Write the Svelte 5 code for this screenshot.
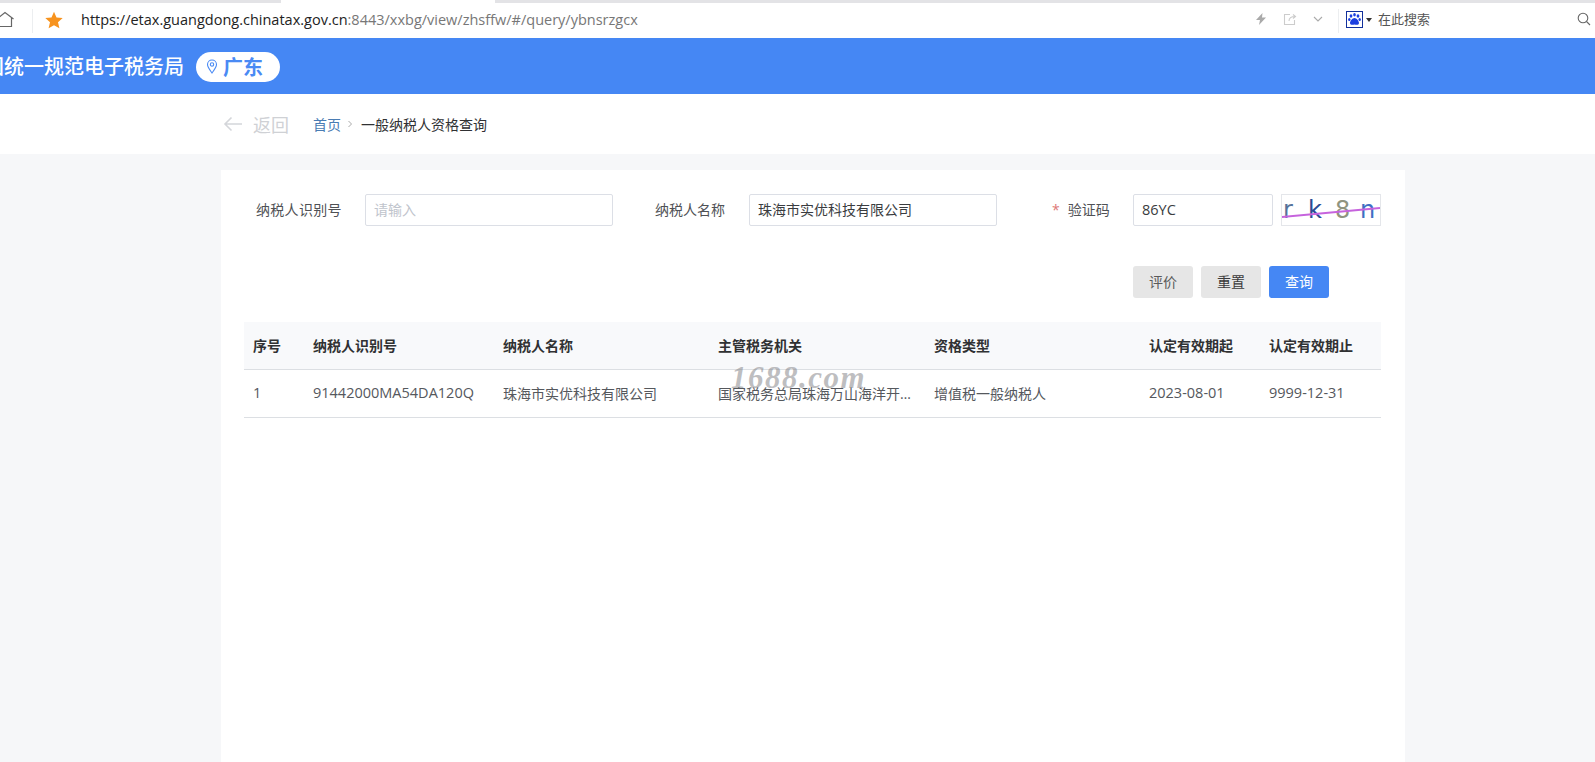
<script>
  const cols = [
    { h: '序号', v: '1', w: 60, latin: true },
    { h: '纳税人识别号', v: '91442000MA54DA120Q', w: 190, latin: true },
    { h: '纳税人名称', v: '珠海市实优科技有限公司', w: 215 },
    { h: '主管税务机关', v: '国家税务总局珠海万山海洋开发试验区税务局', w: 216 },
    { h: '资格类型', v: '增值税一般纳税人', w: 215 },
    { h: '认定有效期起', v: '2023-08-01', w: 120, latin: true },
    { h: '认定有效期止', v: '9999-12-31', w: 121, latin: true }
  ];
  const grid = cols.map((c) => c.w + 'px').join(' ');
</script>

<div class="page">
  <div class="browser">
    <div class="tabstrip"><i class="t1"></i><i class="t2"></i><i class="t3"></i></div>
    <div class="addr">
      <svg class="home" width="16" height="18" viewBox="0 0 16 18" fill="none" stroke="#666" stroke-width="1.2"><path d="M-3 8 L5 1.5 L13.5 8 M11.5 7 V15.5 H-2"/></svg>
      <span class="sep s1"></span>
      <svg class="star" width="18" height="18" viewBox="0 0 18 18"><path fill="#f7931e" d="M9 .8l2.5 5.7 6.2.6-4.7 4.1 1.4 6.1L9 14.2l-5.4 3.1L5 11.2.3 7.1l6.2-.6z"/></svg>
      <span class="url"><b>https://etax.guangdong.chinatax.gov.cn</b>:8443/xxbg/view/zhsffw/#/query/ybnsrzgcx</span>
      <div class="tools">
        <svg width="14" height="14" viewBox="0 0 14 14"><path fill="#aaa" d="M8.5 1 2 8h4l-1 5 7-7.5H8z"/></svg>
        <svg width="14" height="14" viewBox="0 0 14 14" fill="none" stroke="#ccc" stroke-width="1.1"><path d="M7 2.5H1.5v10h10V8M6 9c0-3 2-4.500 6-4.500M10 2.500l2.500 2-2.500 2"/></svg>
        <svg width="12" height="12" viewBox="0 0 12 12" fill="none" stroke="#aaa" stroke-width="1.1"><path d="M2 4l4 4 4-4"/></svg>
      </div>
      <span class="sep s2"></span>
      <svg class="paw" width="17" height="17" viewBox="0 0 17 17">
        <rect x=".5" y=".5" width="16" height="16" fill="#fff" stroke="#12309c"/>
        <g fill="#1c3fe0"><ellipse cx="5" cy="5" rx="1.400" ry="1.800"/><ellipse cx="8.500" cy="3.800" rx="1.300" ry="1.700"/><ellipse cx="12" cy="5" rx="1.400" ry="1.800"/><ellipse cx="3.300" cy="8.500" rx="1.200" ry="1.500"/><ellipse cx="13.700" cy="8.500" rx="1.200" ry="1.500"/><path d="M8.500 7c-2 0-4.500 3-4.500 5 0 2 2.500 2 4.500 1.500 2 .5 4.500.5 4.500-1.500 0-2-2.500-5-4.500-5z"/></g>
      </svg>
      <span class="caret"></span>
      <span class="search">在此搜索</span>
      <svg class="mag" width="14" height="14" viewBox="0 0 14 14" fill="none" stroke="#666" stroke-width="1.100"><circle cx="6" cy="6" r="4.800"/><path d="M9.500 9.500 13 13"/></svg>
    </div>
  </div>

  <header class="banner">
    <h1>全国统一规范电子税务局</h1>
    <div class="pill">
      <svg width="12" height="15" viewBox="0 0 12 15" fill="none" stroke="#4a8af4" stroke-width="1.100"><path d="M6 14C3.500 10.500 1.500 8 1.500 5.500a4.500 4.500 0 0 1 9 0C10.500 8 8.500 10.500 6 14z"/><circle cx="6" cy="5.500" r="1.700"/></svg>
      <span>广东</span>
    </div>
  </header>

  <nav class="crumbs">
    <div class="back">
      <svg width="20" height="16" viewBox="0 0 20 16" fill="none" stroke="#d4d6da" stroke-width="1.600"><path d="M19 8H2M8.500 1.500 2 8l6.500 6.500"/></svg>
      <span>返回</span>
    </div>
    <a class="home-link" href="#top">首页</a>
    <svg class="chev" width="6" height="8" viewBox="0 0 6 8" fill="none" stroke="#aaa"><path d="M1.500 1 4.500 4 1.500 7"/></svg>
    <span class="current">一般纳税人资格查询</span>
  </nav>

  <main class="card">
    <form class="filters">
      <label class="l1" for="nsrsbh">纳税人识别号</label>
      <input class="i1" id="nsrsbh" placeholder="请输入" />
      <label class="l2" for="nsrmc">纳税人名称</label>
      <input class="i2" id="nsrmc" value="珠海市实优科技有限公司" />
      <label class="l3" for="yzm"><em>*</em>验证码</label>
      <input class="i3" id="yzm" value="86YC" />
      <div class="captcha">
        <svg width="100" height="32" viewBox="0 0 100 32">
          <text x="2" y="24" fill="#56739a">r</text>
          <text x="27" y="24" fill="#2b4a94">k</text>
          <text x="54" y="24" fill="#8f9480">8</text>
          <text x="79" y="24" fill="#3f6fc4">n</text>
          <path d="M1 23 99 14" stroke="#c663dd" stroke-width="2"/>
        </svg>
      </div>
    </form>

    <div class="actions">
      <button type="button" class="grey soft">评价</button>
      <button type="button" class="grey">重置</button>
      <button type="button" class="primary">查询</button>
    </div>

    <div class="table">
      <div class="row head" style="grid-template-columns:{grid}">
        {#each cols as c}<div class="cell">{c.h}</div>{/each}
      </div>
      <div class="row body" style="grid-template-columns:{grid}">
        {#each cols as c}<div class="cell" class:latin={c.latin}>{c.v}</div>{/each}
      </div>
      <span class="mark">1688.com</span>
    </div>
  </main>
</div>

<style>
  :global(body) {
    margin: 0;
    overflow: hidden;
    background: #f6f7f9;
  }
  .page {
    width: 1595px;
    height: 762px;
    overflow: hidden;
    display: flex;
    flex-direction: column;
    font-family: "Open Sans", "Noto Sans CJK SC", sans-serif;
    background: #f6f7f9;
  }
  .browser {
    height: 38px;
    flex: none;
    background: #fff;
    display: flex;
    flex-direction: column;
  }
  .tabstrip {
    height: 3px;
    display: flex;
    flex: none;
  }
  .tabstrip i { display: block; height: 3px; background: #e3e3e6; }
  .t1 { width: 281px; }
  .t2 { width: 214px; background: #fff !important; }
  .t3 { flex: 1; }
  .addr {
    flex: 1;
    display: flex;
    align-items: center;
  }
  .home { margin-top: -1px; flex: none; width: 16px; }
  .sep { width: 1px; height: 24px; background: #eceef0; flex: none; }
  .s1 { margin-left: 16px; }
  .star { margin-left: 12px; margin-top: -1px; flex: none; }
  .url {
    margin-left: 18px;
    font-size: 14.500px;
    color: #777;
    white-space: nowrap;
    width: 1126px;
    margin-top: -3px;
  }
  .url b { font-weight: 400; color: #222; }
  .tools {
    display: flex;
    align-items: center;
    gap: 15px;
    width: 84px;
    margin-left: 47px;
    margin-top: -3px;
  }
  .paw { margin-left: 7px; flex: none; margin-top: -2px; }
  .caret {
    margin-left: 3px;
    border: 3px solid transparent;
    border-top: 4px solid #333;
    border-bottom: 0;
    flex: none;
    margin-top: -2px;
  }
  .search {
    margin-left: 6px;
    font-size: 13px;
    color: #555;
    width: 199px;
    margin-top: -4px;
  }
  .mag { flex: none; margin-top: -3px; }

  .banner {
    height: 56px;
    flex: none;
    background: #4587f4;
    display: flex;
    align-items: center;
  }
  h1 {
    margin: 2px 0 0 -36px;
    font-size: 20px;
    font-weight: 500;
    color: #fff;
    line-height: 30px;
    white-space: nowrap;
  }
  .pill {
    margin-left: 12px;
    width: 84px;
    height: 30px;
    border-radius: 15px;
    background: #fff;
    display: flex;
    align-items: center;
    box-sizing: border-box;
    padding-left: 10px;
    gap: 5px;
    color: #4a8af4;
    font-size: 20px;
    font-weight: 700;
    margin-top: 1px;
  }
  .crumbs {
    height: 60px;
    flex: none;
    background: #fff;
    display: flex;
    align-items: center;
    padding-left: 223px;
    font-size: 14px;
  }
  .back {
    display: flex;
    align-items: center;
    gap: 10px;
    color: #cfd1d5;
    font-size: 18px;
    width: 90px;
  }
  .home-link { color: #4a7cb3; text-decoration: none; }
  .chev { margin: 0 8px 0 6px; }
  .current { color: #303133; }

  .card {
    margin: 16px 0 0 221px;
    width: 1184px;
    flex: 1;
    background: #fff;
    box-sizing: border-box;
    padding: 24px 24px 0 23px;
  }
  .filters {
    display: flex;
    align-items: center;
    height: 32px;
    font-size: 14px;
    color: #606266;
  }
  label { white-space: nowrap; color: #4f5155; padding-bottom: 3px; }
  input {
    box-sizing: border-box;
    height: 32px;
    border: 1px solid #dcdfe6;
    border-radius: 2px;
    padding: 0 8px 2px;
    font: inherit;
    color: #3a3c40;
    outline: none;
    background: #fff;
    flex: none;
  }
  input::placeholder { color: #c0c4cc; opacity: 1; }
  .i3 { font-size: 14.500px; }
  .l1 { margin-left: 12px; width: 109px; letter-spacing: .3px; }
  .i1 { width: 248px; }
  .l2 { margin-left: 42px; width: 94px; }
  .i2 { width: 248px; }
  .l3 { margin-left: 55px; width: 81px; }
  .l3 em { font-style: normal; color: #d77; margin-right: 8px; }
  .i3 { width: 140px; }
  .captcha {
    margin-left: 8px;
    width: 100px;
    height: 32px;
    box-sizing: border-box;
    border: 1px solid #e4e6ea;
    overflow: hidden;
    flex: none;
  }
  .captcha svg { display: block; margin: -1px; }
  .captcha text { font-family: "DejaVu Sans", sans-serif; font-size: 24px; }

  .actions {
    display: flex;
    gap: 8px;
    margin-top: 40px;
    padding-left: 889px;
  }
  button {
    width: 60px;
    height: 32px;
    border: 0;
    border-radius: 3px;
    font: inherit;
    font-size: 14px;
    padding: 0 0 2px;
  }
  .grey { background: #e6e6e6; color: #3a3a3a; }
  .soft { color: #5a5a5a; }
  .primary { background: #4587f4; color: #fff; }

  .table {
    margin-top: 24px;
    position: relative;
    width: 1137px;
    font-size: 14px;
  }
  .row { display: grid; }
  .cell {
    padding: 0 9px;
    white-space: nowrap;
    overflow: hidden;
    text-overflow: ellipsis;
    box-sizing: border-box;
    min-width: 0;
  }
  .head {
    height: 48px;
    align-items: center;
    background: #f8f9fb;
    border-bottom: 1px solid #dcdfe3;
    box-sizing: border-box;
    font-weight: 700;
    color: #303133;
    font-size: 14px;
    padding-bottom: 1px;
  }
  .body {
    height: 48px;
    align-items: center;
    border-bottom: 1px solid #dcdfe3;
    box-sizing: border-box;
    color: #55585d;
    padding-bottom: 2px;
  }
  .latin { font-size: 14.500px; }
  .mark {
    position: absolute;
    left: 487px;
    top: 40px;
    font-family: "Liberation Serif", serif;
    font-style: italic;
    font-weight: 700;
    font-size: 31px;
    letter-spacing: 1.500px;
    color: rgba(125, 125, 130, 0.5);
    line-height: 32px;
  }
</style>
